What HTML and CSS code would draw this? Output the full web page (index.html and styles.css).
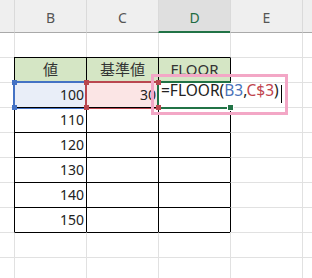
FILE: index.html
```html
<!DOCTYPE html>
<html lang="ja">
  <head>
    <meta charset="UTF-8" />
    <meta name="viewport" content="width=device-width, initial-scale=1.0" />
    <title>FLOOR</title>
    <link rel="stylesheet" href="styles.css">
  </head>
  <body>
    <div class="sheet">
      <!-- column headers -->
      <div class="hd gut"></div>
      <div class="hd">B</div>
      <div class="hd">C</div>
      <div class="hd on">D</div>
      <div class="hd">E</div>
      <div class="hd"></div>

      <!-- row 1 -->
      <div class="c gut r1"></div>
      <div class="c r1"></div>
      <div class="c r1"></div>
      <div class="c r1"></div>
      <div class="c r1"></div>
      <div class="c r1"></div>

      <!-- row 2: table header -->
      <div class="c gut"></div>
      <div class="c t th">値</div>
      <div class="c t th">基準値</div>
      <div class="c t th">FLOOR</div>
      <div class="c tr"></div>
      <div class="c"></div>

      <!-- row 3: formula being edited -->
      <div class="c gut"></div>
      <div class="c t num range blue">
        100
        <span class="handle nw"></span>
        <span class="handle ne"></span>
        <span class="handle sw"></span>
        <span class="handle se"></span>
      </div>
      <div class="c t num range red">
        30
        <span class="handle nw"></span>
        <span class="handle ne"></span>
        <span class="handle sw"></span>
        <span class="handle se"></span>
      </div>
      <div class="c t active">
        <div class="edit">=FLOOR(<span class="ref-b">B3</span>,<span class="ref-c">C$3</span>)</div>
        <span class="fill"></span>
      </div>
      <div class="c tr"></div>
      <div class="c"></div>

      <div class="c gut"></div>
      <div class="c t num">110</div>
      <div class="c t"></div>
      <div class="c t"></div>
      <div class="c tr"></div>
      <div class="c"></div>

      <div class="c gut"></div>
      <div class="c t num">120</div>
      <div class="c t"></div>
      <div class="c t"></div>
      <div class="c tr"></div>
      <div class="c"></div>

      <div class="c gut"></div>
      <div class="c t num">130</div>
      <div class="c t"></div>
      <div class="c t"></div>
      <div class="c tr"></div>
      <div class="c"></div>

      <div class="c gut"></div>
      <div class="c t num">140</div>
      <div class="c t"></div>
      <div class="c t"></div>
      <div class="c tr"></div>
      <div class="c"></div>

      <div class="c gut"></div>
      <div class="c t num">150</div>
      <div class="c t"></div>
      <div class="c t"></div>
      <div class="c tr"></div>
      <div class="c"></div>

      <!-- rows below the table -->
      <div class="c gut"></div>
      <div class="c tb"></div>
      <div class="c tb"></div>
      <div class="c tb"></div>
      <div class="c"></div>
      <div class="c"></div>

      <div class="c gut"></div>
      <div class="c"></div>
      <div class="c"></div>
      <div class="c"></div>
      <div class="c"></div>
      <div class="c"></div>

      <div class="note"></div>
    </div>
  </body>
</html>
```

FILE: styles.css
```css
* {
  box-sizing: border-box;
}

body {
  margin: 0;
  background: #fff;
  font-family: "Noto Sans", "Noto Sans CJK JP", sans-serif;
  color: #222;
  overflow: hidden;
}

.sheet {
  position: relative;
  display: grid;
  grid-template-columns: 14px repeat(4, 72px) 1fr;
  grid-template-rows: 33px 24px repeat(9, 25px);
  width: 312px;
  height: 278px;
}

/* column header strip */
.hd {
  background: #efefef;
  border-left: 1px solid #dadada;
  border-bottom: 1px solid #a9a9a9;
  font-size: 14px;
  color: #555;
  text-align: center;
  padding-top: 5px;
  line-height: 26px;
}

.hd.gut {
  border-left: 0;
}

.hd.on {
  background: #dfdfdf;
  color: #1e6b41;
  border-bottom: 2px solid #217346;
}

/* cells */
.c {
  position: relative;
  border-left: 1px solid #e1e1e1;
  border-top: 1px solid #e1e1e1;
  font-size: 14px;
  line-height: 24px;
  white-space: nowrap;
}

.c.gut {
  border-left: 0;
}

.c.r1 {
  border-top: 0;
}

.c.t {
  border-left-color: #000;
  border-top-color: #000;
}

.c.tr {
  border-left-color: #000;
}

.c.tb {
  border-top-color: #000;
}

.th {
  background: #d5e6c5;
  text-align: center;
  font-size: 15px;
  line-height: 22px;
  color: #333;
}

.num {
  text-align: right;
  padding-right: 2px;
}

/* referenced ranges */
.range::before {
  content: "";
  position: absolute;
  left: -2px;
  top: -2px;
  right: -1px;
  bottom: -2px;
  border: 2px solid;
}

.range.blue {
  background: #e9eef8;
}

.range.blue::before {
  border-color: #4472c4;
}

.range.blue .handle {
  background: #4472c4;
}

.range.red {
  background: #fbe5e5;
}

.range.red::before {
  border-color: #b9474f;
}

.range.red .handle {
  background: #b9474f;
}

.handle {
  position: absolute;
  width: 5px;
  height: 5px;
  z-index: 3;
}

.handle.nw { left: -3px; top: -3px; }
.handle.ne { right: -3px; top: -3px; }
.handle.sw { left: -3px; bottom: -3px; }
.handle.se { right: -3px; bottom: -3px; }

/* active cell in edit mode */
.active::before {
  content: "";
  position: absolute;
  left: -2px;
  top: -2px;
  right: -1px;
  bottom: -2px;
  border: 2px solid #217346;
  z-index: 2;
}

.edit {
  position: absolute;
  left: 0;
  top: 0;
  width: 126px;
  height: 24px;
  padding-left: 2px;
  background: #fff;
  font-size: 15.5px;
  line-height: 14px;
  color: #222;
  z-index: 2;
}

/* text cursor */
.edit::after {
  content: "";
  display: inline-block;
  width: 1px;
  height: 18px;
  margin-left: 2px;
  vertical-align: -7px;
  background: #000;
}

.ref-b {
  color: #4a72b8;
}

.ref-c {
  color: #c0444e;
}

.fill {
  position: absolute;
  right: -4px;
  bottom: -4px;
  width: 7px;
  height: 7px;
  background: #217346;
  border: 1px solid #fff;
  z-index: 3;
}

/* pink call-out box */
.note {
  position: absolute;
  left: 151px;
  top: 74px;
  width: 137px;
  height: 41px;
  border: 3px solid #f3a7c6;
  z-index: 4;
}
```
